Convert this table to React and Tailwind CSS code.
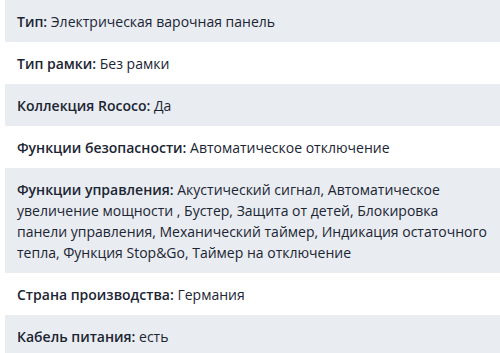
const rows = [
  ['Тип', 'Электрическая варочная панель'],
  ['Тип рамки', 'Без рамки'],
  ['Коллекция Rococo', 'Да'],
  ['Функции безопасности', 'Автоматическое отключение'],
  [
    'Функции управления',
    'Акустический сигнал, Автоматическое увеличение мощности , Бустер, Защита от детей, Блокировка панели управления, Механический таймер, Индикация остаточного тепла, Функция Stop&Go, Таймер на отключение',
  ],
  ['Страна производства', 'Германия'],
  ['Кабель питания', 'есть'],
]

export default function App() {
  return (
    <div className="w-[500px] h-[353px] overflow-hidden bg-white pl-[5px] font-['Open_Sans',sans-serif] text-[14px] leading-[21px] text-[#1b2533]">
      {rows.map(([label, value], i) => (
        <div
          key={label}
          className={`pl-3 pr-2 py-[10.5px] ${i % 2 === 0 ? 'bg-[#e9ecf1]' : 'bg-white'}`}
        >
          <span className="font-semibold">{label}:</span> {value}
        </div>
      ))}
    </div>
  )
}
